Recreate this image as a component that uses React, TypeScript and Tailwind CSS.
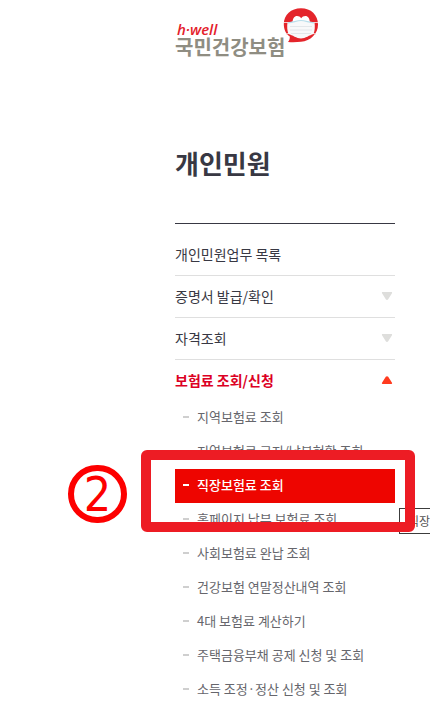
import React from 'react';

interface MenuItem {
  label: string;
  href: string;
  arrow: boolean;
}

const menuItems: MenuItem[] = [
  { label: '개인민원업무 목록', href: '#list', arrow: false },
  { label: '증명서 발급/확인', href: '#certificate', arrow: true },
  { label: '자격조회', href: '#qualification', arrow: true },
];

const subItems = [
  '지역보험료 조회',
  '지역보험료 고지/납부현황 조회',
  '직장보험료 조회',
  '홈페이지 납부 보험료 조회',
  '사회보험료 완납 조회',
  '건강보험 연말정산내역 조회',
  '4대 보험료 계산하기',
  '주택금융부채 공제 신청 및 조회',
  '소득 조정·정산 신청 및 조회',
];

const ACTIVE_ITEM = '직장보험료 조회';

const Arrow = ({ open = false }: { open?: boolean }) => (
  <svg
    viewBox="0 0 12 10"
    className={open ? 'h-[10px] w-3 rotate-180 text-[#ff3b1f]' : 'h-[10px] w-3 text-[#dededc]'}
    aria-hidden="true"
  >
    <path d="M1.5 1h9c.6 0 .8.7.5 1.2L7.200 8.200c-.5.9-1.900.9-2.400 0L1 2.200C.7 1.700.9 1 1.500 1z" fill="currentColor" />
  </svg>
);

const LogoSymbol = () => (
  <svg viewBox="0 0 36 36" className="h-9 w-9" aria-hidden="true">
    <path d="M18 .3C8 .3 .8 7 .8 16c0 5.500 2.200 10 6 12.500 0 2.500-.3 3.500-1.800 5.500 5 .5 9 .2 13-.2 9.500-.8 17-8 17-17.300C35 7 28 .3 18 .3z" fill="#e4252b" />
    <path d="M9.500 15C9.500 10.500 11.500 8 14 8c1.800 0 3.200.8 4.200 2.300C19.200 8.800 20.600 8 22.400 8c2.500 0 4.500 2.500 4.500 7z" fill="#fff" />
    <path d="M1 14.500h5M35 14.500h-5M3 26l5-1M33 26l-5-1" stroke="#f3c9c9" strokeWidth="1" fill="none" />
    <path d="M4.500 14.500c5-.2 9-2.500 13.500-2.500s8.500 2.300 13.500 2.500c.6 4 .4 8-1 11.500-4 1-8 4.500-12.500 4.500S9.500 27 5.500 26c-1.400-3.500-1.600-7.500-1-11.500z" fill="#f8f9fa" />
    <path d="M5 14.800c5-.3 8.800-2.300 13-2.300s8 2 13 2.300" stroke="#b9dfec" strokeWidth="1.200" fill="none" />
    <path d="M7 18.500h22M7 22h22M8 25.500h20" stroke="#dde2e6" strokeWidth=".8" fill="none" />
  </svg>
);

const Logo = () => (
  <a href="#home" className="flex h-[49px] items-end">
    <span className="flex flex-col whitespace-nowrap">
      <span className="pl-0.5 font-['Open_Sans',sans-serif] text-[15px] leading-4 font-semibold text-[#e4202b] italic">h·well</span>
      <span className="text-xl leading-5 font-bold text-[#8f8d82]">국민건강보험</span>
    </span>
    <span className="-ml-0.5 self-start">
      <LogoSymbol />
    </span>
  </a>
);

const SubMenu = () => (
  <ul>
    {subItems.map((label) => {
      const active = label === ACTIVE_ITEM;
      return (
        <li key={label} className={active ? 'relative bg-[#ee0500]' : ''}>
          <a
            href="#inquiry"
            className={`flex h-[34px] items-center gap-2 pb-0.5 pl-2 text-[13px] whitespace-nowrap ${
              active ? 'font-medium text-white' : 'text-[#66666c]'
            }`}
          >
            <span className={`h-0.5 w-1.5 ${active ? 'bg-white' : 'bg-[#cfcfcf]'}`} />
            {label}
          </a>
          {active && (
            <>
              <span className="absolute top-[39px] left-56 h-[26px] w-28 border border-[#3c3c3c] bg-white pl-2 text-xs leading-6 whitespace-nowrap text-[#555]">
                직장보험료 조회
              </span>
              <span className="pointer-events-none absolute -top-[19px] -right-5 -bottom-[29px] -left-[34px] rounded-md border-10 border-[#ed1c24]" />
              <span className="absolute -top-1 -left-[107px] flex h-[58px] w-[59px] items-center justify-center rounded-full border-6 border-[#fd0000] font-['DejaVu_Sans_Condensed','Open_Sans',sans-serif] text-5xl text-[#fd0000]">
                2
              </span>
            </>
          )}
        </li>
      );
    })}
  </ul>
);

export default function App() {
  return (
    <div className="overflow-hidden bg-white pt-2 pr-[35px] pb-2 pl-[175px] font-['Noto_Sans_CJK_KR',sans-serif]">
      <header>
        <Logo />
      </header>
      <aside>
        <h1 className="mt-[86px] text-[26px] leading-10 font-bold text-[#383843]">개인민원</h1>
        <nav className="mt-10 border-t border-[#383843] pt-[10px]">
          <ul>
            {menuItems.map(({ label, href, arrow }) => (
              <li key={label} className="border-b border-[#dfdfdf]">
                <a href={href} className="flex h-[41px] items-center justify-between pr-0.5 pb-0.5 text-sm text-[#383843]">
                  {label}
                  {arrow && <Arrow />}
                </a>
              </li>
            ))}
            <li>
              <a href="#premium" className="flex h-[41px] items-center justify-between pr-0.5 pb-0.5 text-sm font-bold text-[#dc0024]">
                보험료 조회/신청
                <Arrow open />
              </a>
              <SubMenu />
            </li>
          </ul>
        </nav>
      </aside>
    </div>
  );
}
